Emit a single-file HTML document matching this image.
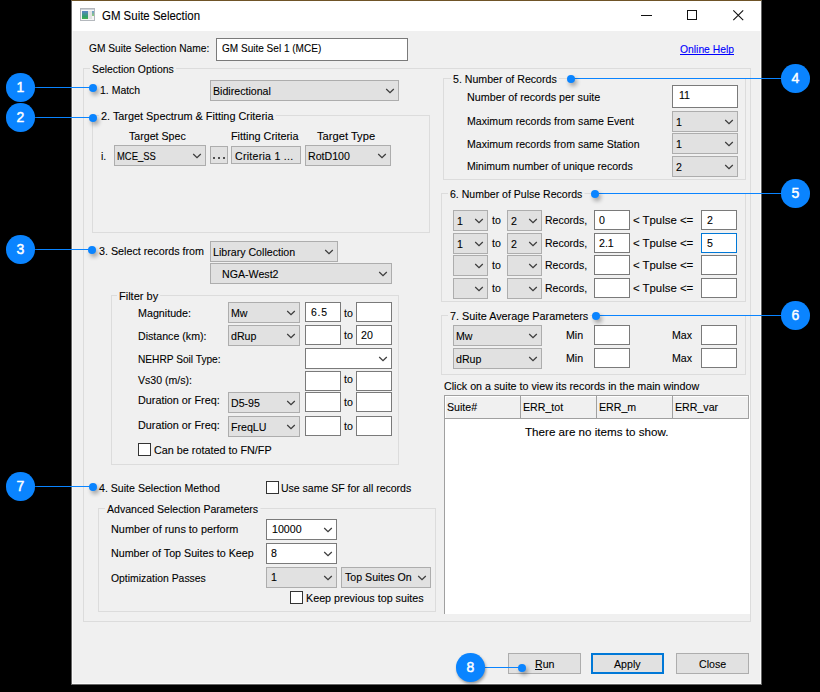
<!DOCTYPE html>
<html><head><meta charset="utf-8"><style>
html,body{margin:0;padding:0;}
body{width:820px;height:692px;background:#000;position:relative;overflow:hidden;}
.t{position:absolute;white-space:nowrap;font:11.5px/14px "Liberation Sans",sans-serif;color:#000;transform-origin:0 0;-webkit-text-stroke:0.1px currentColor;}
</style></head><body>
<div style="position:absolute;left:71px;top:0;width:691px;height:685px;background:#f0f0f0;box-sizing:border-box;border:1px solid #666;border-top-color:#6f5427"></div>
<div style="position:absolute;left:72px;top:1px;width:689px;height:30px;box-sizing:border-box;background:#fff"></div>
<div style="position:absolute;left:72px;top:31px;width:1px;height:653px;box-sizing:border-box;background:#fafafa"></div>
<div style="position:absolute;left:760px;top:31px;width:1px;height:653px;box-sizing:border-box;background:#fafafa"></div>
<div style="position:absolute;left:72px;top:683px;width:689px;height:1px;box-sizing:border-box;background:#fafafa"></div>
<div style="position:absolute;left:80px;top:8px;width:15px;height:13px;box-sizing:border-box;border:1px solid #b4b8bd;background:#f6f6f6"><div style="position:absolute;left:1px;top:2px;width:6px;height:8px;background:linear-gradient(#5b84c6,#2f9f6a 70%,#48b04a)"></div><div style="position:absolute;left:7px;top:2px;width:4px;height:8px;background:#e3e3e3"></div><div style="position:absolute;left:11px;top:2px;width:2px;height:5px;background:linear-gradient(#6d9ad0,#8fd07a)"></div><div style="position:absolute;left:0;top:0;width:13px;height:1px;background:#cfd3d8"></div></div>
<div class="t" style="left:101.50px;top:9px;transform:scaleX(0.9159);font-size:12.5px;">GM Suite Selection</div>
<div style="position:absolute;left:641px;top:15px;width:11px;height:1px;box-sizing:border-box;background:#111"></div>
<div style="position:absolute;left:687px;top:10px;width:10px;height:10px;box-sizing:border-box;border:1px solid #111"></div>
<svg style="position:absolute;left:732px;top:9px" width="13" height="13" viewBox="0 0 13 13"><path d="M1.3 1.3 L11.2 11.2 M11.2 1.3 L1.3 11.2" stroke="#111" stroke-width="1.1"/></svg>
<div class="t" style="left:88.70px;top:41px;transform:scaleX(0.8877);">GM Suite Selection Name:</div>
<div style="position:absolute;left:216px;top:38px;width:192px;height:23px;box-sizing:border-box;background:#fff;border:1px solid #7a7a7a"></div>
<div class="t" style="left:222.00px;top:41px;transform:scaleX(0.8725);">GM Suite Sel 1 (MCE)</div>
<div class="t" style="left:680.00px;top:42px;transform:scaleX(0.8986);color:#0000ff;">Online Help</div>
<div style="position:absolute;left:680px;top:54px;width:54px;height:1px;box-sizing:border-box;background:#0000ff"></div>
<div style="position:absolute;left:83px;top:68px;width:668px;height:554px;box-sizing:border-box;border:1px solid #dcdcdc"></div>
<div class="t" style="left:90.00px;top:62px;padding:0 2.21px;transform:scaleX(0.9069);background:#f0f0f0;">Selection Options</div>
<div class="t" style="left:100.00px;top:83px;transform:scaleX(0.9114);">1. Match</div>
<div style="position:absolute;left:210px;top:80px;width:189px;height:21px;box-sizing:border-box;background:#e1e1e1;border:1px solid #adadad"><svg width="10" height="6" style="position:absolute;right:3px;top:7px" viewBox="0 0 10 6"><path d="M1.2 1 L5 4.7 L8.8 1" fill="none" stroke="#3c3c3c" stroke-width="1.25"/></svg></div>
<div class="t" style="left:213.00px;top:84px;transform:scaleX(0.9240);">Bidirectional</div>
<div style="position:absolute;left:92px;top:115px;width:338px;height:118px;box-sizing:border-box;border:1px solid #dcdcdc"></div>
<div class="t" style="left:99.30px;top:109px;padding:0 2.12px;transform:scaleX(0.9447);background:#f0f0f0;">2. Target Spectrum &amp; Fitting Criteria</div>
<div class="t" style="left:128.70px;top:129px;transform:scaleX(0.9240);">Target Spec</div>
<div class="t" style="left:230.50px;top:129px;transform:scaleX(0.9430);">Fitting Criteria</div>
<div class="t" style="left:317.00px;top:129px;transform:scaleX(0.9701);">Target Type</div>
<div class="t" style="left:101.00px;top:149px;transform:scaleX(0.9240);">i.</div>
<div style="position:absolute;left:114px;top:145px;width:92px;height:21px;box-sizing:border-box;background:#e1e1e1;border:1px solid #adadad"><svg width="10" height="6" style="position:absolute;right:3px;top:7px" viewBox="0 0 10 6"><path d="M1.2 1 L5 4.7 L8.8 1" fill="none" stroke="#3c3c3c" stroke-width="1.25"/></svg></div>
<div class="t" style="left:117.00px;top:149px;transform:scaleX(0.8193);">MCE_SS</div>
<div style="position:absolute;left:210px;top:146px;width:18px;height:18px;box-sizing:border-box;background:#e1e1e1;border:1px solid #adadad"></div>
<div style="position:absolute;left:213px;top:157px;width:2px;height:2px;box-sizing:border-box;background:#505050"></div>
<div style="position:absolute;left:218px;top:157px;width:2px;height:2px;box-sizing:border-box;background:#505050"></div>
<div style="position:absolute;left:223px;top:157px;width:2px;height:2px;box-sizing:border-box;background:#505050"></div>
<div style="position:absolute;left:231px;top:146px;width:70px;height:18px;box-sizing:border-box;background:#e1e1e1;border:1px solid #adadad"></div>
<div class="t" style="left:235.40px;top:149px;transform:scaleX(0.9192);letter-spacing:0.3px;">Criteria 1 ...</div>
<div style="position:absolute;left:305px;top:145px;width:86px;height:21px;box-sizing:border-box;background:#e1e1e1;border:1px solid #adadad"><svg width="10" height="6" style="position:absolute;right:3px;top:7px" viewBox="0 0 10 6"><path d="M1.2 1 L5 4.7 L8.8 1" fill="none" stroke="#3c3c3c" stroke-width="1.25"/></svg></div>
<div class="t" style="left:308.00px;top:149px;transform:scaleX(0.9240);">RotD100</div>
<div class="t" style="left:99.00px;top:244px;transform:scaleX(0.9335);">3. Select records from</div>
<div style="position:absolute;left:210px;top:241px;width:128px;height:21px;box-sizing:border-box;background:#e1e1e1;border:1px solid #adadad"><svg width="10" height="6" style="position:absolute;right:3px;top:7px" viewBox="0 0 10 6"><path d="M1.2 1 L5 4.7 L8.8 1" fill="none" stroke="#3c3c3c" stroke-width="1.25"/></svg></div>
<div class="t" style="left:213.00px;top:245px;transform:scaleX(0.9240);">Library Collection</div>
<div style="position:absolute;left:210px;top:263px;width:182px;height:21px;box-sizing:border-box;background:#e1e1e1;border:1px solid #adadad"><svg width="10" height="6" style="position:absolute;right:3px;top:7px" viewBox="0 0 10 6"><path d="M1.2 1 L5 4.7 L8.8 1" fill="none" stroke="#3c3c3c" stroke-width="1.25"/></svg></div>
<div class="t" style="left:222.00px;top:267px;transform:scaleX(0.9240);">NGA-West2</div>
<div style="position:absolute;left:111px;top:295px;width:288px;height:170px;box-sizing:border-box;border:1px solid #dcdcdc"></div>
<div class="t" style="left:117.40px;top:289px;padding:0 2.09px;transform:scaleX(0.9583);background:#f0f0f0;">Filter by</div>
<div class="t" style="left:137.60px;top:306px;transform:scaleX(0.9314);">Magnitude:</div>
<div style="position:absolute;left:228px;top:302px;width:72px;height:21px;box-sizing:border-box;background:#e1e1e1;border:1px solid #adadad"><svg width="10" height="6" style="position:absolute;right:3px;top:7px" viewBox="0 0 10 6"><path d="M1.2 1 L5 4.7 L8.8 1" fill="none" stroke="#3c3c3c" stroke-width="1.25"/></svg></div>
<div class="t" style="left:231.00px;top:306px;transform:scaleX(0.9240);">Mw</div>
<div style="position:absolute;left:305px;top:302px;width:36px;height:20px;box-sizing:border-box;background:#fff;border:1px solid #7a7a7a"></div>
<div class="t" style="left:310.60px;top:305px;transform:scaleX(0.9081);letter-spacing:0.8px;">6.5</div>
<div class="t" style="left:344.00px;top:306px;transform:scaleX(0.9240);">to</div>
<div style="position:absolute;left:356px;top:302px;width:36px;height:20px;box-sizing:border-box;background:#fff;border:1px solid #7a7a7a"></div>
<div class="t" style="left:137.60px;top:329px;transform:scaleX(0.9240);">Distance (km):</div>
<div style="position:absolute;left:228px;top:325px;width:72px;height:21px;box-sizing:border-box;background:#e1e1e1;border:1px solid #adadad"><svg width="10" height="6" style="position:absolute;right:3px;top:7px" viewBox="0 0 10 6"><path d="M1.2 1 L5 4.7 L8.8 1" fill="none" stroke="#3c3c3c" stroke-width="1.25"/></svg></div>
<div class="t" style="left:231.00px;top:329px;transform:scaleX(0.9240);">dRup</div>
<div style="position:absolute;left:305px;top:325px;width:36px;height:20px;box-sizing:border-box;background:#fff;border:1px solid #7a7a7a"></div>
<div class="t" style="left:344.00px;top:328px;transform:scaleX(0.9240);">to</div>
<div style="position:absolute;left:356px;top:325px;width:36px;height:20px;box-sizing:border-box;background:#fff;border:1px solid #7a7a7a"></div>
<div class="t" style="left:361.00px;top:328px;transform:scaleX(0.9240);">20</div>
<div class="t" style="left:137.60px;top:352px;transform:scaleX(0.8830);">NEHRP Soil Type:</div>
<div style="position:absolute;left:305px;top:348px;width:87px;height:21px;box-sizing:border-box;background:#fff;border:1px solid #7a7a7a"><svg width="10" height="6" style="position:absolute;right:3px;top:7px" viewBox="0 0 10 6"><path d="M1.2 1 L5 4.7 L8.8 1" fill="none" stroke="#3c3c3c" stroke-width="1.25"/></svg></div>
<div class="t" style="left:138.00px;top:373px;transform:scaleX(0.9184);">Vs30 (m/s):</div>
<div style="position:absolute;left:305px;top:371px;width:36px;height:20px;box-sizing:border-box;background:#fff;border:1px solid #7a7a7a"></div>
<div class="t" style="left:344.00px;top:372px;transform:scaleX(0.9240);">to</div>
<div style="position:absolute;left:356px;top:371px;width:36px;height:20px;box-sizing:border-box;background:#fff;border:1px solid #7a7a7a"></div>
<div class="t" style="left:137.70px;top:393px;transform:scaleX(0.9398);">Duration or Freq:</div>
<div style="position:absolute;left:228px;top:392px;width:72px;height:21px;box-sizing:border-box;background:#e1e1e1;border:1px solid #adadad"><svg width="10" height="6" style="position:absolute;right:3px;top:7px" viewBox="0 0 10 6"><path d="M1.2 1 L5 4.7 L8.8 1" fill="none" stroke="#3c3c3c" stroke-width="1.25"/></svg></div>
<div class="t" style="left:231.00px;top:396px;transform:scaleX(0.9240);">D5-95</div>
<div style="position:absolute;left:305px;top:392px;width:36px;height:20px;box-sizing:border-box;background:#fff;border:1px solid #7a7a7a"></div>
<div class="t" style="left:344.00px;top:395px;transform:scaleX(0.9240);">to</div>
<div style="position:absolute;left:356px;top:392px;width:36px;height:20px;box-sizing:border-box;background:#fff;border:1px solid #7a7a7a"></div>
<div class="t" style="left:137.70px;top:418px;transform:scaleX(0.9398);">Duration or Freq:</div>
<div style="position:absolute;left:228px;top:416px;width:72px;height:21px;box-sizing:border-box;background:#e1e1e1;border:1px solid #adadad"><svg width="10" height="6" style="position:absolute;right:3px;top:7px" viewBox="0 0 10 6"><path d="M1.2 1 L5 4.7 L8.8 1" fill="none" stroke="#3c3c3c" stroke-width="1.25"/></svg></div>
<div class="t" style="left:231.00px;top:420px;transform:scaleX(0.9240);">FreqLU</div>
<div style="position:absolute;left:305px;top:416px;width:36px;height:20px;box-sizing:border-box;background:#fff;border:1px solid #7a7a7a"></div>
<div class="t" style="left:344.00px;top:419px;transform:scaleX(0.9240);">to</div>
<div style="position:absolute;left:356px;top:416px;width:36px;height:20px;box-sizing:border-box;background:#fff;border:1px solid #7a7a7a"></div>
<div style="position:absolute;left:138px;top:443px;width:13px;height:13px;box-sizing:border-box;background:#fff;border:1px solid #333"></div>
<div class="t" style="left:153.70px;top:443px;transform:scaleX(0.9386);">Can be rotated to FN/FP</div>
<div class="t" style="left:99.20px;top:481px;transform:scaleX(0.9217);">4. Suite Selection Method</div>
<div style="position:absolute;left:266px;top:481px;width:13px;height:13px;box-sizing:border-box;background:#fff;border:1px solid #333"></div>
<div class="t" style="left:281.30px;top:481px;transform:scaleX(0.9136);">Use same SF for all records</div>
<div style="position:absolute;left:98px;top:508px;width:338px;height:104px;box-sizing:border-box;border:1px solid #dcdcdc"></div>
<div class="t" style="left:104.90px;top:502px;padding:0 2.17px;transform:scaleX(0.9197);background:#f0f0f0;">Advanced Selection Parameters</div>
<div class="t" style="left:110.70px;top:522px;transform:scaleX(0.9439);">Number of runs to perform</div>
<div style="position:absolute;left:266px;top:519px;width:71px;height:21px;box-sizing:border-box;background:#fff;border:1px solid #7a7a7a"><svg width="10" height="6" style="position:absolute;right:3px;top:7px" viewBox="0 0 10 6"><path d="M1.2 1 L5 4.7 L8.8 1" fill="none" stroke="#3c3c3c" stroke-width="1.25"/></svg></div>
<div class="t" style="left:272.00px;top:522px;transform:scaleX(0.9240);">10000</div>
<div class="t" style="left:110.70px;top:546px;transform:scaleX(0.9313);">Number of Top Suites to Keep</div>
<div style="position:absolute;left:266px;top:543px;width:71px;height:21px;box-sizing:border-box;background:#fff;border:1px solid #7a7a7a"><svg width="10" height="6" style="position:absolute;right:3px;top:7px" viewBox="0 0 10 6"><path d="M1.2 1 L5 4.7 L8.8 1" fill="none" stroke="#3c3c3c" stroke-width="1.25"/></svg></div>
<div class="t" style="left:271.00px;top:546px;transform:scaleX(0.9240);">8</div>
<div class="t" style="left:110.70px;top:571px;transform:scaleX(0.9043);">Optimization Passes</div>
<div style="position:absolute;left:266px;top:567px;width:71px;height:21px;box-sizing:border-box;background:#e1e1e1;border:1px solid #adadad"><svg width="10" height="6" style="position:absolute;right:3px;top:7px" viewBox="0 0 10 6"><path d="M1.2 1 L5 4.7 L8.8 1" fill="none" stroke="#3c3c3c" stroke-width="1.25"/></svg></div>
<div class="t" style="left:271.00px;top:570px;transform:scaleX(0.9240);">1</div>
<div style="position:absolute;left:341px;top:567px;width:90px;height:21px;box-sizing:border-box;background:#e1e1e1;border:1px solid #adadad"><svg width="10" height="6" style="position:absolute;right:3px;top:7px" viewBox="0 0 10 6"><path d="M1.2 1 L5 4.7 L8.8 1" fill="none" stroke="#3c3c3c" stroke-width="1.25"/></svg></div>
<div class="t" style="left:345.00px;top:570px;transform:scaleX(0.9240);">Top Suites On</div>
<div style="position:absolute;left:290px;top:591px;width:13px;height:13px;box-sizing:border-box;background:#fff;border:1px solid #333"></div>
<div class="t" style="left:305.60px;top:591px;transform:scaleX(0.9345);">Keep previous top suites</div>
<div style="position:absolute;left:443px;top:78px;width:303px;height:102px;box-sizing:border-box;border:1px solid #dcdcdc"></div>
<div class="t" style="left:450.50px;top:72px;padding:0 2.17px;transform:scaleX(0.9222);background:#f0f0f0;">5. Number of Records</div>
<div class="t" style="left:466.75px;top:90px;transform:scaleX(0.9348);">Number of records per suite</div>
<div class="t" style="left:466.75px;top:114px;transform:scaleX(0.9201);">Maximum records from same Event</div>
<div class="t" style="left:466.75px;top:137px;transform:scaleX(0.9181);">Maximum records from same Station</div>
<div class="t" style="left:466.75px;top:159px;transform:scaleX(0.9163);">Minimum number of unique records</div>
<div style="position:absolute;left:672px;top:85px;width:66px;height:23px;box-sizing:border-box;background:#fff;border:1px solid #7a7a7a"></div>
<div class="t" style="left:678.60px;top:88px;transform:scaleX(0.9240);">11</div>
<div style="position:absolute;left:672px;top:111px;width:66px;height:21px;box-sizing:border-box;background:#e1e1e1;border:1px solid #adadad"><svg width="10" height="6" style="position:absolute;right:3px;top:7px" viewBox="0 0 10 6"><path d="M1.2 1 L5 4.7 L8.8 1" fill="none" stroke="#3c3c3c" stroke-width="1.25"/></svg></div>
<div class="t" style="left:676.00px;top:115px;transform:scaleX(0.9240);">1</div>
<div style="position:absolute;left:672px;top:133px;width:66px;height:21px;box-sizing:border-box;background:#e1e1e1;border:1px solid #adadad"><svg width="10" height="6" style="position:absolute;right:3px;top:7px" viewBox="0 0 10 6"><path d="M1.2 1 L5 4.7 L8.8 1" fill="none" stroke="#3c3c3c" stroke-width="1.25"/></svg></div>
<div class="t" style="left:676.00px;top:137px;transform:scaleX(0.9240);">1</div>
<div style="position:absolute;left:672px;top:156px;width:66px;height:21px;box-sizing:border-box;background:#e1e1e1;border:1px solid #adadad"><svg width="10" height="6" style="position:absolute;right:3px;top:7px" viewBox="0 0 10 6"><path d="M1.2 1 L5 4.7 L8.8 1" fill="none" stroke="#3c3c3c" stroke-width="1.25"/></svg></div>
<div class="t" style="left:676.00px;top:160px;transform:scaleX(0.9240);">2</div>
<div style="position:absolute;left:441px;top:193px;width:305px;height:109px;box-sizing:border-box;border:1px solid #dcdcdc"></div>
<div class="t" style="left:447.90px;top:187px;padding:0 2.18px;transform:scaleX(0.9159);background:#f0f0f0;">6. Number of Pulse Records</div>
<div style="position:absolute;left:453px;top:210px;width:35px;height:21px;box-sizing:border-box;background:#e1e1e1;border:1px solid #adadad"><svg width="10" height="6" style="position:absolute;right:3px;top:7px" viewBox="0 0 10 6"><path d="M1.2 1 L5 4.7 L8.8 1" fill="none" stroke="#3c3c3c" stroke-width="1.25"/></svg></div>
<div class="t" style="left:457.00px;top:214px;transform:scaleX(0.9240);">1</div>
<div class="t" style="left:492.00px;top:213px;transform:scaleX(0.9240);">to</div>
<div style="position:absolute;left:507px;top:210px;width:35px;height:21px;box-sizing:border-box;background:#e1e1e1;border:1px solid #adadad"><svg width="10" height="6" style="position:absolute;right:3px;top:7px" viewBox="0 0 10 6"><path d="M1.2 1 L5 4.7 L8.8 1" fill="none" stroke="#3c3c3c" stroke-width="1.25"/></svg></div>
<div class="t" style="left:511.00px;top:214px;transform:scaleX(0.9240);">2</div>
<div class="t" style="left:545.40px;top:213px;transform:scaleX(0.9146);">Records,</div>
<div style="position:absolute;left:594px;top:210px;width:36px;height:20px;box-sizing:border-box;background:#fff;border:1px solid #7a7a7a"></div>
<div class="t" style="left:599.00px;top:213px;transform:scaleX(0.9240);">0</div>
<div class="t" style="left:633.30px;top:213px;transform:scaleX(0.9892);">&lt; Tpulse &lt;=</div>
<div style="position:absolute;left:701px;top:210px;width:36px;height:20px;box-sizing:border-box;background:#fff;border:1px solid #7a7a7a"></div>
<div class="t" style="left:707.00px;top:213px;transform:scaleX(0.9240);">2</div>
<div style="position:absolute;left:453px;top:233px;width:35px;height:21px;box-sizing:border-box;background:#e1e1e1;border:1px solid #adadad"><svg width="10" height="6" style="position:absolute;right:3px;top:7px" viewBox="0 0 10 6"><path d="M1.2 1 L5 4.7 L8.8 1" fill="none" stroke="#3c3c3c" stroke-width="1.25"/></svg></div>
<div class="t" style="left:457.00px;top:237px;transform:scaleX(0.9240);">1</div>
<div class="t" style="left:492.00px;top:236px;transform:scaleX(0.9240);">to</div>
<div style="position:absolute;left:507px;top:233px;width:35px;height:21px;box-sizing:border-box;background:#e1e1e1;border:1px solid #adadad"><svg width="10" height="6" style="position:absolute;right:3px;top:7px" viewBox="0 0 10 6"><path d="M1.2 1 L5 4.7 L8.8 1" fill="none" stroke="#3c3c3c" stroke-width="1.25"/></svg></div>
<div class="t" style="left:511.00px;top:237px;transform:scaleX(0.9240);">2</div>
<div class="t" style="left:545.40px;top:236px;transform:scaleX(0.9146);">Records,</div>
<div style="position:absolute;left:594px;top:233px;width:36px;height:20px;box-sizing:border-box;background:#fff;border:1px solid #7a7a7a"></div>
<div class="t" style="left:599.00px;top:236px;transform:scaleX(0.9240);">2.1</div>
<div class="t" style="left:633.30px;top:236px;transform:scaleX(0.9892);">&lt; Tpulse &lt;=</div>
<div style="position:absolute;left:701px;top:233px;width:36px;height:20px;box-sizing:border-box;background:#fff;border:1px solid #0078d7"></div>
<div class="t" style="left:707.00px;top:236px;transform:scaleX(0.9240);">5</div>
<div style="position:absolute;left:453px;top:255px;width:35px;height:21px;box-sizing:border-box;background:#e1e1e1;border:1px solid #adadad"><svg width="10" height="6" style="position:absolute;right:3px;top:7px" viewBox="0 0 10 6"><path d="M1.2 1 L5 4.7 L8.8 1" fill="none" stroke="#3c3c3c" stroke-width="1.25"/></svg></div>
<div class="t" style="left:492.00px;top:258px;transform:scaleX(0.9240);">to</div>
<div style="position:absolute;left:507px;top:255px;width:35px;height:21px;box-sizing:border-box;background:#e1e1e1;border:1px solid #adadad"><svg width="10" height="6" style="position:absolute;right:3px;top:7px" viewBox="0 0 10 6"><path d="M1.2 1 L5 4.7 L8.8 1" fill="none" stroke="#3c3c3c" stroke-width="1.25"/></svg></div>
<div class="t" style="left:545.40px;top:258px;transform:scaleX(0.9146);">Records,</div>
<div style="position:absolute;left:594px;top:255px;width:36px;height:20px;box-sizing:border-box;background:#fff;border:1px solid #7a7a7a"></div>
<div class="t" style="left:633.30px;top:258px;transform:scaleX(0.9892);">&lt; Tpulse &lt;=</div>
<div style="position:absolute;left:701px;top:255px;width:36px;height:20px;box-sizing:border-box;background:#fff;border:1px solid #7a7a7a"></div>
<div style="position:absolute;left:453px;top:278px;width:35px;height:21px;box-sizing:border-box;background:#e1e1e1;border:1px solid #adadad"><svg width="10" height="6" style="position:absolute;right:3px;top:7px" viewBox="0 0 10 6"><path d="M1.2 1 L5 4.7 L8.8 1" fill="none" stroke="#3c3c3c" stroke-width="1.25"/></svg></div>
<div class="t" style="left:492.00px;top:281px;transform:scaleX(0.9240);">to</div>
<div style="position:absolute;left:507px;top:278px;width:35px;height:21px;box-sizing:border-box;background:#e1e1e1;border:1px solid #adadad"><svg width="10" height="6" style="position:absolute;right:3px;top:7px" viewBox="0 0 10 6"><path d="M1.2 1 L5 4.7 L8.8 1" fill="none" stroke="#3c3c3c" stroke-width="1.25"/></svg></div>
<div class="t" style="left:545.40px;top:281px;transform:scaleX(0.9146);">Records,</div>
<div style="position:absolute;left:594px;top:278px;width:36px;height:20px;box-sizing:border-box;background:#fff;border:1px solid #7a7a7a"></div>
<div class="t" style="left:633.30px;top:281px;transform:scaleX(0.9892);">&lt; Tpulse &lt;=</div>
<div style="position:absolute;left:701px;top:278px;width:36px;height:20px;box-sizing:border-box;background:#fff;border:1px solid #7a7a7a"></div>
<div style="position:absolute;left:441px;top:315px;width:305px;height:60px;box-sizing:border-box;border:1px solid #dcdcdc"></div>
<div class="t" style="left:447.90px;top:309px;padding:0 2.12px;transform:scaleX(0.9419);background:#f0f0f0;">7. Suite Average Parameters</div>
<div style="position:absolute;left:453px;top:325px;width:89px;height:21px;box-sizing:border-box;background:#e1e1e1;border:1px solid #adadad"><svg width="10" height="6" style="position:absolute;right:3px;top:7px" viewBox="0 0 10 6"><path d="M1.2 1 L5 4.7 L8.8 1" fill="none" stroke="#3c3c3c" stroke-width="1.25"/></svg></div>
<div class="t" style="left:456.00px;top:329px;transform:scaleX(0.9240);">Mw</div>
<div style="position:absolute;left:453px;top:348px;width:89px;height:21px;box-sizing:border-box;background:#e1e1e1;border:1px solid #adadad"><svg width="10" height="6" style="position:absolute;right:3px;top:7px" viewBox="0 0 10 6"><path d="M1.2 1 L5 4.7 L8.8 1" fill="none" stroke="#3c3c3c" stroke-width="1.25"/></svg></div>
<div class="t" style="left:456.00px;top:352px;transform:scaleX(0.9240);">dRup</div>
<div class="t" style="left:566.00px;top:328px;transform:scaleX(0.9240);">Min</div>
<div class="t" style="left:566.00px;top:351px;transform:scaleX(0.9240);">Min</div>
<div style="position:absolute;left:594px;top:325px;width:36px;height:20px;box-sizing:border-box;background:#fff;border:1px solid #7a7a7a"></div>
<div style="position:absolute;left:594px;top:348px;width:36px;height:20px;box-sizing:border-box;background:#fff;border:1px solid #7a7a7a"></div>
<div class="t" style="left:671.50px;top:328px;transform:scaleX(0.9240);">Max</div>
<div class="t" style="left:671.50px;top:351px;transform:scaleX(0.9240);">Max</div>
<div style="position:absolute;left:701px;top:325px;width:36px;height:20px;box-sizing:border-box;background:#fff;border:1px solid #7a7a7a"></div>
<div style="position:absolute;left:701px;top:348px;width:36px;height:20px;box-sizing:border-box;background:#fff;border:1px solid #7a7a7a"></div>
<div class="t" style="left:444.00px;top:379px;transform:scaleX(0.9307);">Click on a suite to view its records in the main window</div>
<div style="position:absolute;left:444px;top:395px;width:306px;height:219px;box-sizing:border-box;background:#fff;border-left:1px solid #a0a0a0"></div>
<div style="position:absolute;left:444px;top:395px;width:305px;height:24px;box-sizing:border-box;background:#f0f0f0;border:1px solid #a0a0a0;box-shadow:inset 1px 1px 0 #fff"></div>
<div style="position:absolute;left:520px;top:396px;width:1px;height:22px;box-sizing:border-box;background:#a0a0a0"></div>
<div style="position:absolute;left:596px;top:396px;width:1px;height:22px;box-sizing:border-box;background:#a0a0a0"></div>
<div style="position:absolute;left:672px;top:396px;width:1px;height:22px;box-sizing:border-box;background:#a0a0a0"></div>
<div class="t" style="left:447.40px;top:400px;transform:scaleX(0.9240);">Suite#</div>
<div class="t" style="left:522.70px;top:400px;transform:scaleX(0.9240);">ERR_tot</div>
<div class="t" style="left:599.20px;top:400px;transform:scaleX(0.9240);">ERR_m</div>
<div class="t" style="left:675.30px;top:400px;transform:scaleX(0.9240);">ERR_var</div>
<div class="t" style="left:524.90px;top:425px;transform:scaleX(1.0105);">There are no items to show.</div>
<div style="position:absolute;left:508px;top:653px;width:73px;height:21px;box-sizing:border-box;background:#e1e1e1;border:1px solid #adadad"></div>
<div class="t" style="left:534.75px;top:657px;transform:scaleX(0.9240);">Run</div>
<div style="position:absolute;left:535px;top:669px;width:7px;height:1px;box-sizing:border-box;background:#000"></div>
<div style="position:absolute;left:591px;top:653px;width:73px;height:21px;box-sizing:border-box;background:#e1e1e1;border:2px solid #0078d7"></div>
<div class="t" style="left:614.20px;top:657px;transform:scaleX(0.9240);">Apply</div>
<div style="position:absolute;left:676px;top:653px;width:73px;height:21px;box-sizing:border-box;background:#e1e1e1;border:1px solid #adadad"></div>
<div class="t" style="left:698.91px;top:657px;transform:scaleX(0.9240);">Close</div>
<div style="position:absolute;left:20.4px;top:86.65px;width:72.1px;height:1.5px;background:#0a84ff"></div>
<div style="position:absolute;left:88.5px;top:83.7px;width:8px;height:8px;border-radius:50%;background:#0a84ff;box-shadow:2px 3px 4px rgba(0,0,0,.32)"></div>
<div style="position:absolute;left:6.10px;top:73.10px;width:28.6px;height:28.6px;border-radius:50%;background:#0a84ff;box-shadow:1px 2px 3px rgba(0,0,0,.35);color:#fff;font:14px/28px 'Liberation Sans',sans-serif;-webkit-text-stroke:0.45px #fff;text-align:center">1</div>
<div style="position:absolute;left:20.4px;top:116.85px;width:72.1px;height:1.5px;background:#0a84ff"></div>
<div style="position:absolute;left:88.5px;top:113.5px;width:8px;height:8px;border-radius:50%;background:#0a84ff;box-shadow:2px 3px 4px rgba(0,0,0,.32)"></div>
<div style="position:absolute;left:6.10px;top:103.30px;width:28.6px;height:28.6px;border-radius:50%;background:#0a84ff;box-shadow:1px 2px 3px rgba(0,0,0,.35);color:#fff;font:14px/28px 'Liberation Sans',sans-serif;-webkit-text-stroke:0.45px #fff;text-align:center">2</div>
<div style="position:absolute;left:20.4px;top:248.65px;width:71.1px;height:1.5px;background:#0a84ff"></div>
<div style="position:absolute;left:87.5px;top:245.5px;width:8px;height:8px;border-radius:50%;background:#0a84ff;box-shadow:2px 3px 4px rgba(0,0,0,.32)"></div>
<div style="position:absolute;left:6.10px;top:235.10px;width:28.6px;height:28.6px;border-radius:50%;background:#0a84ff;box-shadow:1px 2px 3px rgba(0,0,0,.35);color:#fff;font:14px/28px 'Liberation Sans',sans-serif;-webkit-text-stroke:0.45px #fff;text-align:center">3</div>
<div style="position:absolute;left:20.4px;top:485.75px;width:72.1px;height:1.5px;background:#0a84ff"></div>
<div style="position:absolute;left:88.5px;top:482.6px;width:8px;height:8px;border-radius:50%;background:#0a84ff;box-shadow:2px 3px 4px rgba(0,0,0,.32)"></div>
<div style="position:absolute;left:6.10px;top:472.20px;width:28.6px;height:28.6px;border-radius:50%;background:#0a84ff;box-shadow:1px 2px 3px rgba(0,0,0,.35);color:#fff;font:14px/28px 'Liberation Sans',sans-serif;-webkit-text-stroke:0.45px #fff;text-align:center">7</div>
<div style="position:absolute;left:571.3px;top:77.65px;width:224.10000000000002px;height:1.5px;background:#0a84ff"></div>
<div style="position:absolute;left:567.3px;top:74.7px;width:8px;height:8px;border-radius:50%;background:#0a84ff;box-shadow:2px 3px 4px rgba(0,0,0,.32)"></div>
<div style="position:absolute;left:781.10px;top:64.10px;width:28.6px;height:28.6px;border-radius:50%;background:#0a84ff;box-shadow:1px 2px 3px rgba(0,0,0,.35);color:#fff;font:14px/28px 'Liberation Sans',sans-serif;-webkit-text-stroke:0.45px #fff;text-align:center">4</div>
<div style="position:absolute;left:594.7px;top:192.65px;width:200.79999999999995px;height:1.5px;background:#0a84ff"></div>
<div style="position:absolute;left:590.7px;top:189.6px;width:8px;height:8px;border-radius:50%;background:#0a84ff;box-shadow:2px 3px 4px rgba(0,0,0,.32)"></div>
<div style="position:absolute;left:781.20px;top:179.10px;width:28.6px;height:28.6px;border-radius:50%;background:#0a84ff;box-shadow:1px 2px 3px rgba(0,0,0,.35);color:#fff;font:14px/28px 'Liberation Sans',sans-serif;-webkit-text-stroke:0.45px #fff;text-align:center">5</div>
<div style="position:absolute;left:595.8px;top:314.85px;width:199.70000000000005px;height:1.5px;background:#0a84ff"></div>
<div style="position:absolute;left:591.8px;top:311.8px;width:8px;height:8px;border-radius:50%;background:#0a84ff;box-shadow:2px 3px 4px rgba(0,0,0,.32)"></div>
<div style="position:absolute;left:781.20px;top:301.30px;width:28.6px;height:28.6px;border-radius:50%;background:#0a84ff;box-shadow:1px 2px 3px rgba(0,0,0,.35);color:#fff;font:14px/28px 'Liberation Sans',sans-serif;-webkit-text-stroke:0.45px #fff;text-align:center">6</div>
<div style="position:absolute;left:470.5px;top:666.85px;width:51.200000000000045px;height:1.5px;background:#0a84ff"></div>
<div style="position:absolute;left:517.7px;top:663.6px;width:8px;height:8px;border-radius:50%;background:#0a84ff;box-shadow:2px 3px 4px rgba(0,0,0,.32)"></div>
<div style="position:absolute;left:456.20px;top:653.30px;width:28.6px;height:28.6px;border-radius:50%;background:#0a84ff;box-shadow:1px 2px 3px rgba(0,0,0,.35);color:#fff;font:14px/28px 'Liberation Sans',sans-serif;-webkit-text-stroke:0.45px #fff;text-align:center">8</div>
</body></html>
